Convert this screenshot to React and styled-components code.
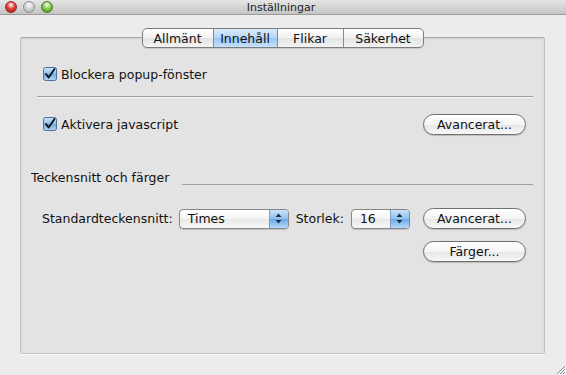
import styled, { createGlobalStyle } from 'styled-components';

const GlobalStyle = createGlobalStyle`
  html, body {
    margin: 0;
    padding: 0;
    background: #ececec;
  }
  * {
    box-sizing: border-box;
  }
`;

const Window = styled.div`
  width: 566px;
  height: 375px;
  display: flex;
  flex-direction: column;
  background: #ececec;
  font-family: "DejaVu Sans", "Liberation Sans", sans-serif;
  font-size: 12.5px;
  color: #111;
  overflow: hidden;
`;

const TitleBar = styled.div`
  height: 16px;
  display: flex;
  align-items: center;
  padding-left: 5px;
  background: linear-gradient(#e6e6e6, #c4c4c4);
  border-bottom: 1px solid #9c9c9c;
`;

const Lights = styled.div`
  display: flex;
  gap: 6px;
`;

const Light = styled.span`
  width: 12px;
  height: 12px;
  border-radius: 50%;
  border: 1px solid ${p => p.$edge};
  background: radial-gradient(circle at 50% 30%, #fff 0%, ${p => p.$color} 45%, ${p => p.$dark} 100%);
`;

const Title = styled.div`
  flex: 1;
  text-align: center;
  margin-left: -57px;
  font-size: 11px;
  color: #222;
`;

const Content = styled.div`
  flex: 1;
  display: flex;
  flex-direction: column;
  padding: 13px 21px 0 20px;
`;

const Segments = styled.div`
  align-self: center;
  display: flex;
  height: 20px;
  border: 1px solid #7d7d7d;
  border-radius: 5px;
  overflow: hidden;
  position: relative;
  z-index: 1;
  background: linear-gradient(#ffffff, #f1f1f1 50%, #e3e3e3 51%, #f4f4f4);
  box-shadow: 0 1px 1px rgba(0, 0, 0, 0.12);
`;

const Segment = styled.div`
  width: ${p => p.$w}px;
  display: flex;
  align-items: center;
  justify-content: center;
  font-size: 12.5px;
  border-left: ${p => (p.$first ? 'none' : '1px solid #8a8a8a')};
  background: ${p => (p.$active ? 'linear-gradient(#d9ebfb, #b4d6f5 50%, #98c5f0 51%, #c7e2fb)' : 'transparent')};
`;

const Panel = styled.div`
  margin-top: -11px;
  height: 317px;
  border: 1px solid #c2c2c2;
  border-top-color: #a8a8a8;
  border-radius: 2px;
  background: #e3e3e3;
  box-shadow: inset 0 1px 2px rgba(0, 0, 0, 0.08), 0 1px 0 #fafafa;
  display: flex;
  flex-direction: column;
  padding-top: 27px;
`;

const CheckRow = styled.div`
  height: ${p => p.$h}px;
  margin-top: ${p => p.$mt || 0}px;
  display: flex;
  align-items: center;
  padding: 0 18px 0 22px;
`;

const CheckLabel = styled.label`
  display: flex;
  align-items: center;
  gap: 4px;
`;

const Spacer = styled.div`
  flex: 1;
`;

const Separator = styled.div`
  height: 1px;
  margin: 13px 11px 0 16px;
  background: #9e9e9e;
  box-shadow: 0 1px 0 #f4f4f4;
`;

const SectionHeader = styled.div`
  margin-top: 34px;
  height: 16px;
  display: flex;
  align-items: flex-end;
  padding: 0 11px 0 10px;
`;

const SectionLine = styled.div`
  flex: 1;
  height: 1px;
  margin: 0 0 0 13px;
  background: #9e9e9e;
`;

const FieldRow = styled.div`
  margin-top: ${p => p.$mt}px;
  height: 21px;
  display: flex;
  align-items: center;
  justify-content: ${p => (p.$end ? 'flex-end' : 'flex-start')};
  padding: 0 18px 0 21px;
`;

const FieldLabel = styled.span`
  margin-right: ${p => p.$gap}px;
`;

const Popup = styled.div`
  width: ${p => p.$w}px;
  height: 20px;
  margin-right: ${p => p.$gap}px;
  display: flex;
  border: 1px solid #868686;
  border-radius: 4px;
  overflow: hidden;
  background: linear-gradient(#ffffff, #f3f3f3 50%, #e8e8e8 51%, #f7f7f7);
  box-shadow: 0 1px 1px rgba(0, 0, 0, 0.15);
`;

const PopupValue = styled.div`
  flex: 1;
  display: flex;
  align-items: center;
  padding-left: 8px;
`;

const PopupArrows = styled.div`
  width: 19px;
  display: flex;
  align-items: center;
  justify-content: center;
  border-left: 1px solid #7f9ec2;
  background: linear-gradient(#cbe3fa, #8fc0ee 50%, #6aa8e6 51%, #b6dafb);
`;

const PillButton = styled.button`
  width: 103px;
  height: 21px;
  padding: 0;
  border: 1px solid #707070;
  border-radius: 11px;
  background: linear-gradient(#ffffff, #f4f4f4 50%, #e6e6e6 51%, #f8f8f8);
  box-shadow: 0 1px 1px rgba(0, 0, 0, 0.18);
  font-family: inherit;
  font-size: 12.5px;
  color: #111;
`;

const Grip = styled.div`
  height: 21px;
  display: flex;
  justify-content: flex-end;
  align-items: flex-end;
  margin-right: -21px;
`;

const CheckBox = () => (
  <svg width="14" height="14" viewBox="0 0 14 14">
    <defs>
      <linearGradient id="cbg" x1="0" y1="0" x2="0" y2="1">
        <stop offset="0" stopColor="#cfe6fb" />
        <stop offset="0.5" stopColor="#8cbde9" />
        <stop offset="0.51" stopColor="#6ea9e2" />
        <stop offset="1" stopColor="#b3d7f7" />
      </linearGradient>
    </defs>
    <rect x="0.5" y="0.5" width="13" height="13" rx="2" fill="url(#cbg)" stroke="#50709a" />
    <path d="M3 7 L5.6 10.5 L11.5 2" fill="none" stroke="#111" strokeWidth="1.9" strokeLinecap="round" strokeLinejoin="round" />
  </svg>
);

const Arrows = () => (
  <svg width="7" height="11" viewBox="0 0 7 11">
    <path d="M3.5 0.5 L6.5 4 L0.5 4 Z" fill="#1f2f45" />
    <path d="M3.5 10.5 L6.5 7 L0.5 7 Z" fill="#1f2f45" />
  </svg>
);

const GripIcon = () => (
  <svg width="11" height="11" viewBox="0 0 11 11">
    <path d="M10 2 L2 10 M10 5 L5 10 M10 8 L8 10" stroke="#8a8a8a" strokeWidth="1" />
    <path d="M11 3 L3 11 M11 6 L6 11 M11 9 L9 11" stroke="#fafafa" strokeWidth="1" />
  </svg>
);

const tabs = [
  { label: 'Allmänt', w: 70 },
  { label: 'Innehåll', w: 64, active: true },
  { label: 'Flikar', w: 66 },
  { label: 'Säkerhet', w: 80 },
];

const App = () => (
  <>
    <GlobalStyle />
    <Window>
      <TitleBar>
        <Lights>
          <Light $color="#e4413b" $dark="#a3140f" $edge="#8e2a25" />
          <Light $color="#d4d4d4" $dark="#a8a8a8" $edge="#8f8f8f" />
          <Light $color="#86c94a" $dark="#3f8c17" $edge="#4c7d2a" />
        </Lights>
        <Title>Inställningar</Title>
      </TitleBar>
      <Content>
        <Segments>
          {tabs.map((t, i) => (
            <Segment key={t.label} $w={t.w} $first={i === 0} $active={t.active}>
              {t.label}
            </Segment>
          ))}
        </Segments>
        <Panel>
          <CheckRow $h={18}>
            <CheckLabel>
              <CheckBox />
              Blockera popup-fönster
            </CheckLabel>
          </CheckRow>
          <Separator />
          <CheckRow $h={22} $mt={16}>
            <CheckLabel>
              <CheckBox />
              Aktivera javascript
            </CheckLabel>
            <Spacer />
            <PillButton>Avancerat...</PillButton>
          </CheckRow>
          <SectionHeader>
            Teckensnitt och färger
            <SectionLine />
          </SectionHeader>
          <FieldRow $mt={23}>
            <FieldLabel $gap={6}>Standardteckensnitt:</FieldLabel>
            <Popup $w={110} $gap={7}>
              <PopupValue>Times</PopupValue>
              <PopupArrows>
                <Arrows />
              </PopupArrows>
            </Popup>
            <FieldLabel $gap={7}>Storlek:</FieldLabel>
            <Popup $w={59} $gap={13}>
              <PopupValue>16</PopupValue>
              <PopupArrows>
                <Arrows />
              </PopupArrows>
            </Popup>
            <PillButton>Avancerat...</PillButton>
          </FieldRow>
          <FieldRow $mt={12} $end>
            <PillButton>Färger...</PillButton>
          </FieldRow>
        </Panel>
        <Grip>
          <GripIcon />
        </Grip>
      </Content>
    </Window>
  </>
);

export default App;
